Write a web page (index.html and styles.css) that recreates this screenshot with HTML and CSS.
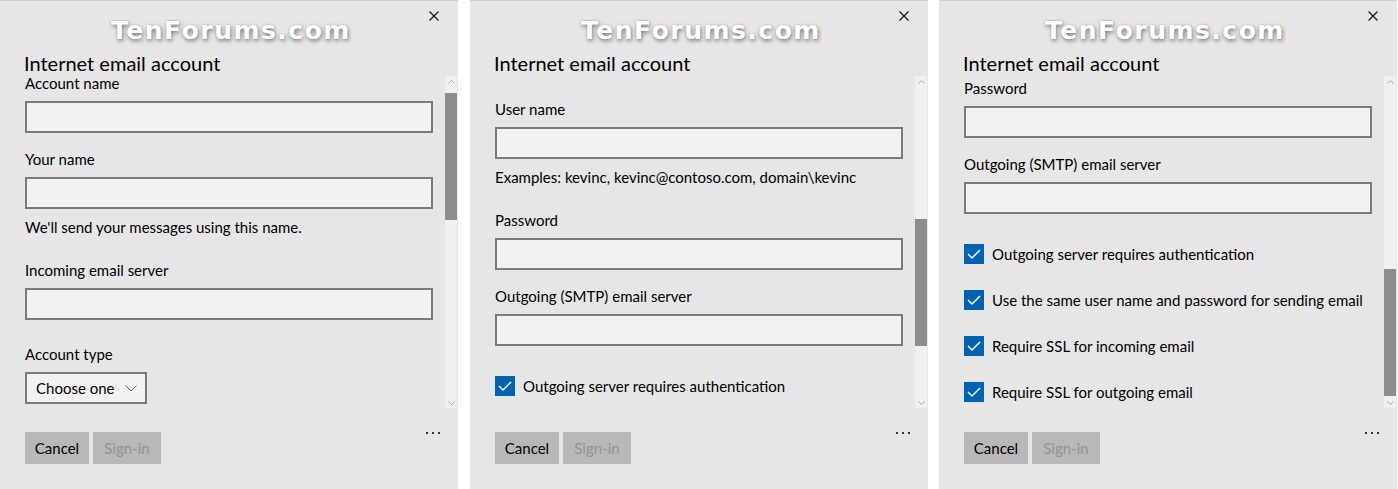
FILE: index.html
```html
<html>
    <head>
        <title>Internet email account</title>
        <link rel="stylesheet" href="styles.css">
    </head>
    <body>
        <div class="screens">
            <!-- step 1: account details -->
            <section class="panel">
                <div class="topbar">
                    <svg class="close" width="10" height="10" viewBox="0 0 10 10"><path d="M0.5 0.5L9.5 9.5M9.5 0.5L0.5 9.5"/></svg>
                </div>
                <div class="watermark">TenForums.com</div>
                <h1 class="title">Internet email account</h1>
                <div class="body">
                    <div class="viewport">
                        <div class="form form-1">
                            <div class="label">Account name</div>
                            <div class="field"></div>
                            <div class="label">Your name</div>
                            <div class="field"></div>
                            <div class="hint">We'll send your messages using this name.</div>
                            <div class="label">Incoming email server</div>
                            <div class="field"></div>
                            <div class="label label-type">Account type</div>
                            <div class="select">
                                <span>Choose one</span>
                                <svg width="12" height="7" viewBox="0 0 12 7"><polyline points="0.5,0.5 6,6 11.5,0.5"/></svg>
                            </div>
                        </div>
                    </div>
                    <div class="scrollbar">
                        <div class="arrow arrow-up"><svg width="7" height="4" viewBox="0 0 7 4"><polyline points="0.5,3.5 3.5,0.5 6.5,3.5"/></svg></div>
                        <div class="track"><div class="thumb" style="margin-top:0;height:127px"></div></div>
                        <div class="arrow arrow-down"><svg width="7" height="4" viewBox="0 0 7 4"><polyline points="0.5,0.5 3.5,3.5 6.5,0.5"/></svg></div>
                    </div>
                </div>
                <div class="footer">
                    <button class="btn btn-cancel">Cancel</button>
                    <button class="btn btn-signin">Sign-in</button>
                    <div class="more"><i></i><i></i><i></i></div>
                </div>
            </section>

            <!-- step 2: scrolled to user name -->
            <section class="panel">
                <div class="topbar">
                    <svg class="close" width="10" height="10" viewBox="0 0 10 10"><path d="M0.5 0.5L9.5 9.5M9.5 0.5L0.5 9.5"/></svg>
                </div>
                <div class="watermark">TenForums.com</div>
                <h1 class="title">Internet email account</h1>
                <div class="body">
                    <div class="viewport">
                        <div class="form form-2">
                            <div class="label">User name</div>
                            <div class="field"></div>
                            <div class="hint">Examples: kevinc, kevinc@contoso.com, domain\kevinc</div>
                            <div class="label">Password</div>
                            <div class="field"></div>
                            <div class="label">Outgoing (SMTP) email server</div>
                            <div class="field"></div>
                            <div class="check-row">
                                <span class="checkbox"><svg width="20" height="20" viewBox="0 0 20 20"><polyline points="4,10 8,14 16,6"/></svg></span>
                                Outgoing server requires authentication
                            </div>
                        </div>
                    </div>
                    <div class="scrollbar">
                        <div class="arrow arrow-up"><svg width="7" height="4" viewBox="0 0 7 4"><polyline points="0.5,3.5 3.5,0.5 6.5,3.5"/></svg></div>
                        <div class="track"><div class="thumb" style="margin-top:126px;height:127px"></div></div>
                        <div class="arrow arrow-down"><svg width="7" height="4" viewBox="0 0 7 4"><polyline points="0.5,0.5 3.5,3.5 6.5,0.5"/></svg></div>
                    </div>
                </div>
                <div class="footer">
                    <button class="btn btn-cancel">Cancel</button>
                    <button class="btn btn-signin">Sign-in</button>
                    <div class="more"><i></i><i></i><i></i></div>
                </div>
            </section>

            <!-- step 3: scrolled to the end -->
            <section class="panel">
                <div class="topbar">
                    <svg class="close" width="10" height="10" viewBox="0 0 10 10"><path d="M0.5 0.5L9.5 9.5M9.5 0.5L0.5 9.5"/></svg>
                </div>
                <div class="watermark watermark-3">TenForums.com</div>
                <h1 class="title">Internet email account</h1>
                <div class="body">
                    <div class="viewport">
                        <div class="form form-3">
                            <div class="label">Password</div>
                            <div class="field"></div>
                            <div class="label">Outgoing (SMTP) email server</div>
                            <div class="field"></div>
                            <div class="check-row">
                                <span class="checkbox"><svg width="20" height="20" viewBox="0 0 20 20"><polyline points="4,10 8,14 16,6"/></svg></span>
                                Outgoing server requires authentication
                            </div>
                            <div class="check-row">
                                <span class="checkbox"><svg width="20" height="20" viewBox="0 0 20 20"><polyline points="4,10 8,14 16,6"/></svg></span>
                                Use the same user name and password for sending email
                            </div>
                            <div class="check-row">
                                <span class="checkbox"><svg width="20" height="20" viewBox="0 0 20 20"><polyline points="4,10 8,14 16,6"/></svg></span>
                                Require SSL for incoming email
                            </div>
                            <div class="check-row">
                                <span class="checkbox"><svg width="20" height="20" viewBox="0 0 20 20"><polyline points="4,10 8,14 16,6"/></svg></span>
                                Require SSL for outgoing email
                            </div>
                        </div>
                    </div>
                    <div class="scrollbar">
                        <div class="arrow arrow-up"><svg width="7" height="4" viewBox="0 0 7 4"><polyline points="0.5,3.5 3.5,0.5 6.5,3.5"/></svg></div>
                        <div class="track"><div class="thumb" style="margin-top:176px;height:127px"></div></div>
                        <div class="arrow arrow-down"><svg width="7" height="4" viewBox="0 0 7 4"><polyline points="0.5,0.5 3.5,3.5 6.5,0.5"/></svg></div>
                    </div>
                </div>
                <div class="footer">
                    <button class="btn btn-cancel">Cancel</button>
                    <button class="btn btn-signin">Sign-in</button>
                    <div class="more"><i></i><i></i><i></i></div>
                </div>
            </section>
        </div>
    </body>
</html>
```

FILE: styles.css
```css
body{
    margin: 0;
    background: #FFF;
    font-family: "Lato", "Open Sans", sans-serif;
    font-size: 15px;
    color: #000;
}
*{
    box-sizing: border-box;
}

.screens{
    display: flex;
    gap: 11px;
}
.panel{
    position: relative;
    display: flex;
    flex-direction: column;
    width: 458px;
    height: 489px;
    background: #E6E6E6;
    border-top: 1px solid #CECECE;
}
.panel:first-child{
    margin-right: 1px;
}

.topbar{
    display: flex;
    justify-content: flex-end;
    height: 49px;
    padding: 10px 19px 0 0;
}
.close path{
    stroke: #1A1A1A;
    stroke-width: 1.3;
    fill: none;
}

/* site watermark over the screenshot */
.watermark{
    position: absolute;
    top: 15px;
    left: 4px;
    right: 0;
    text-align: center;
    font-family: "DejaVu Sans", sans-serif;
    font-weight: bold;
    font-size: 25px;
    letter-spacing: 1.5px;
    color: #FFF;
    text-shadow: 1px 2px 4px rgba(0, 0, 0, .45), 0 0 2px rgba(0, 0, 0, .2);
}
.watermark-3{
    left: -6px;
}

.title{
    margin: 0 0 0 24px;
    height: 26px;
    font-size: 20px;
    font-weight: normal;
    line-height: 26px;
}

.body{
    display: flex;
    height: 332px;
}
.viewport{
    flex: 1;
    padding: 0 12px 0 25px;
}
.form-1{
    margin-top: -3px;
}
.form-2{
    margin-top: 23px;
}
.form-3{
    margin-top: 2px;
}

.label{
    line-height: 20px;
    margin-bottom: 8px;
}
.field{
    height: 32px;
    border: 2px solid #7A7A7A;
    background: #F2F2F2;
}
.field + .label{
    margin-top: 16px;
}
.hint{
    margin-top: 8px;
    line-height: 20px;
}
.hint + .label{
    margin-top: 23px;
}
.field + .label-type{
    margin-top: 24px;
}
.select{
    display: flex;
    align-items: center;
    justify-content: space-between;
    width: 122px;
    height: 32px;
    padding: 0 8px 0 9px;
    border: 2px solid #7A7A7A;
    background: #F2F2F2;
}
.select polyline{
    fill: none;
    stroke: #666;
    stroke-width: 1;
}

.check-row{
    display: flex;
    align-items: center;
    gap: 8px;
    line-height: 20px;
    margin-top: 26px;
}
.field + .check-row{
    margin-top: 30px;
}
.checkbox{
    width: 20px;
    height: 20px;
    background: #0063B1;
}
.checkbox svg{
    display: block;
}
.checkbox polyline{
    fill: none;
    stroke: #FFF;
    stroke-width: 1.5;
}

.scrollbar{
    display: flex;
    flex-direction: column;
    width: 12px;
    margin-right: 1px;
    background: #F0F0F0;
}
.arrow{
    display: flex;
    justify-content: center;
}
.arrow svg{
    display: block;
}
.arrow polyline{
    fill: none;
    stroke: #A8A8A8;
    stroke-width: 1;
}
.arrow-up{
    height: 17px;
    padding-top: 4px;
}
.arrow-down{
    height: 10px;
    padding-top: 3px;
}
.track{
    flex: 1;
}
.thumb{
    background: #8E8E8E;
}

.footer{
    display: flex;
    align-items: flex-start;
    gap: 4px;
    padding: 24px 18px 0 25px;
}
.btn{
    height: 32px;
    padding: 0;
    border: none;
    background: #B8B8B8;
    font-family: inherit;
    font-size: 15px;
    color: #000;
}
.btn-cancel{
    width: 64px;
}
.btn-signin{
    width: 68px;
    color: #939393;
}
.more{
    display: flex;
    gap: 4px;
    margin-left: auto;
}
.more i{
    width: 2px;
    height: 2px;
    background: #333;
}
```
